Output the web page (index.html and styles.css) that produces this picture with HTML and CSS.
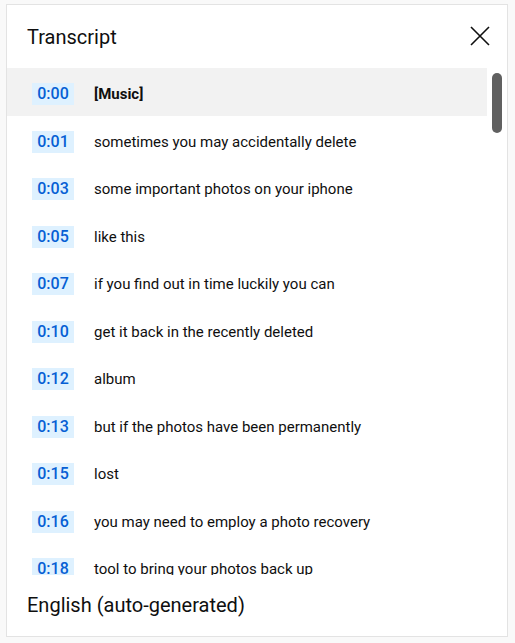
FILE: index.html
```html
<!DOCTYPE html>
<html lang="en">
<head>
  <meta charset="UTF-8">
  <title>Transcript</title>
  <link rel="stylesheet" href="styles.css">
</head>
<body>
<div class="panel">
  <div class="header">
    <span class="title">Transcript</span>
    <span class="close">
      <svg width="20" height="20" viewBox="0 0 20 20"><path d="M1 1 L19 19 M19 1 L1 19" stroke="#0f0f0f" stroke-width="1.6" fill="none"/></svg>
    </span>
  </div>
  <div class="body">
    <ul class="list">
      <li class="row active"><span class="time">0:00</span><span class="text">[Music]</span></li>
      <li class="row"><span class="time">0:01</span><span class="text">sometimes you may accidentally delete</span></li>
      <li class="row"><span class="time">0:03</span><span class="text">some important photos on your iphone</span></li>
      <li class="row"><span class="time">0:05</span><span class="text">like this</span></li>
      <li class="row"><span class="time">0:07</span><span class="text">if you find out in time luckily you can</span></li>
      <li class="row"><span class="time">0:10</span><span class="text">get it back in the recently deleted</span></li>
      <li class="row"><span class="time">0:12</span><span class="text">album</span></li>
      <li class="row"><span class="time">0:13</span><span class="text">but if the photos have been permanently</span></li>
      <li class="row"><span class="time">0:15</span><span class="text">lost</span></li>
      <li class="row"><span class="time">0:16</span><span class="text">you may need to employ a photo recovery</span></li>
      <li class="row"><span class="time">0:18</span><span class="text">tool to bring your photos back up</span></li>
    </ul>
    <div class="track"><div class="thumb"></div></div>
  </div>
  <div class="footer">English (auto-generated)</div>
</div>
</body>
</html>
```

FILE: styles.css
```css
* {
  margin: 0;
  padding: 0;
  box-sizing: border-box;
}

ul {
  list-style: none
}

body {
  background-color: #f9f9f9;
  font-family: Roboto, "Liberation Sans", sans-serif;
  color: #0f0f0f;
  padding: 4px 0 0 6px;
}

.panel {
  width: 502px;
  height: 633px;
  background-color: #fff;
  border: 1px solid #e3e3e3;
  display: flex;
  flex-direction: column;
}

.header {
  height: 63px;
  flex: none;
  display: flex;
  align-items: center;
  justify-content: space-between;
  padding: 0 17px 0 20px;
}

.title {
  font-size: 20px;
  line-height: 28px;
}

.close {
  display: flex;
  width: 20px;
  height: 20px;
  margin-top: -1px;
}

.body {
  height: 507px;
  flex: none;
  display: flex;
  overflow: hidden;
}

.list {
  width: 480px;
  flex: none;
}

.row {
  height: 47.5px;
  display: flex;
  align-items: flex-start;
  padding: 15px 0 0 25px;
}

.row.active {
  background-color: #f2f2f2;
}

.time {
  width: 42px;
  height: 22px;
  line-height: 22px;
  text-align: center;
  background-color: #def1ff;
  color: #065fd4;
  font-size: 16px;
  font-weight: 500;
  flex: none;
}

.text {
  margin-left: 20px;
  font-size: 15px;
  line-height: 22px;
}

.active .text {
  font-weight: 700;
}

.track {
  flex: 1;
  padding: 5px 0 0 5px;
}

.thumb {
  width: 10px;
  height: 60px;
  border-radius: 5px;
  background-color: #606060;
}

.footer {
  flex: 1;
  display: flex;
  align-items: center;
  padding: 0 20px 2px;
  font-size: 20px;
}
```
